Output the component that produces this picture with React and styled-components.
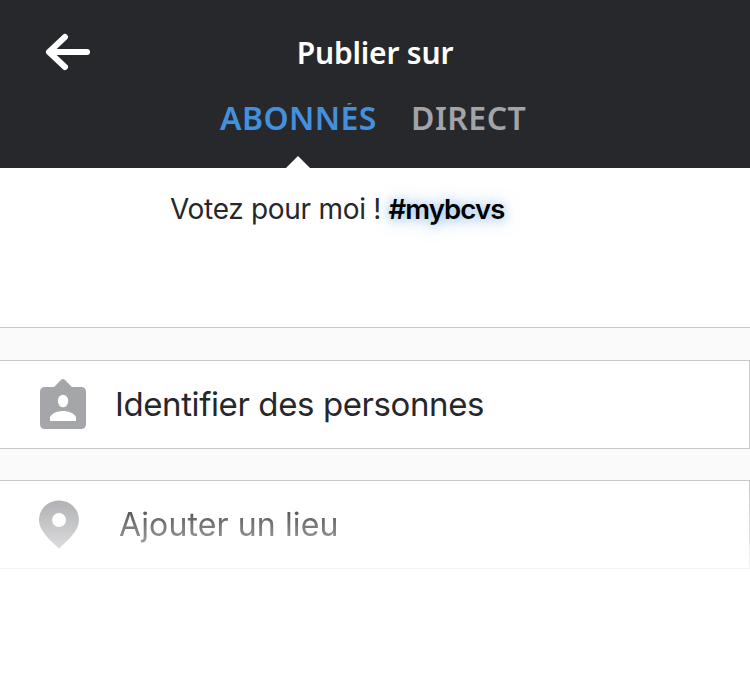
import React from "react";
import styled, { createGlobalStyle } from "styled-components";

const GlobalStyle = createGlobalStyle`
  *, *::before, *::after { box-sizing: border-box; }
  body { margin: 0; background: #fff; }
`;

const Screen = styled.main`
  width: 750px;
  height: 698px;
  overflow: hidden;
  background: #fff;
  font-family: Inter, "Liberation Sans", sans-serif;
  color: #26272b;
`;

const Header = styled.header`
  position: relative;
  height: 168px;
  background: #27282c;
  font-family: "Noto Sans", "Open Sans", sans-serif;
  font-weight: 600;
`;

const TitleBar = styled.div`
  display: grid;
  grid-template-columns: 90px 1fr 90px;
  height: 99px;
`;

const BackButton = styled.button`
  padding: 33px 0 0 45px;
  border: 0;
  background: none;
  display: flex;
  align-items: flex-start;
`;

const Title = styled.h1`
  margin: 33px 0 0;
  text-align: center;
  font-size: 30px;
  line-height: 40px;
  font-weight: 600;
  letter-spacing: -0.2px;
  color: #fff;
`;

const Tabs = styled.nav`
  display: flex;
  gap: 34px;
  padding-left: 220px;
  clip-path: inset(4px 0 0 0);
`;

const Tab = styled.a`
  min-width: ${(p) => p.$width}px;
  white-space: nowrap;
  font-size: 32px;
  line-height: 38px;
  letter-spacing: ${(p) => p.$spacing}px;
  color: ${(p) => (p.$active ? "#4590dc" : "#a3a4a8")};
`;

const TabPointer = styled.span`
  position: absolute;
  left: 286px;
  bottom: 0;
  border: 12px solid transparent;
  border-top: 0;
  border-bottom-color: #fff;
`;

const Caption = styled.p`
  margin: 0;
  height: 159px;
  padding: 23px 0 0 170px;
  font-size: 28px;
  line-height: 36px;
  white-space: pre;
  letter-spacing: -0.3px;
`;

const Hashtag = styled.span`
  color: #000;
  font-size: 27.500px;
  font-weight: 600;
  letter-spacing: -0.9px;
  text-shadow: 0 1px 16px rgba(100, 165, 225, 0.7), 0 1px 9px rgba(120, 175, 225, 0.45);
`;

const Gap = styled.div`
  height: ${(p) => p.$height}px;
  background: #fafafa;
  border-top: ${(p) => (p.$line ? "1px solid #c7c8ca" : "0")};
`;

const Row = styled.section`
  display: flex;
  align-items: flex-start;
  height: 89px;
  border: 1px solid #c7c8ca;
  border-left: 0;
`;

const Fade = styled.div`
  mask-image: linear-gradient(to bottom, #000 8px, transparent 109px);
`;

const IconSlot = styled.span`
  display: flex;
  width: ${(p) => p.$width}px;
  padding: 18px 0 0 38px;
`;

const Label = styled.span`
  padding-top: ${(p) => p.$top}px;
  font-size: ${(p) => p.$size}px;
  line-height: 44px;
  letter-spacing: ${(p) => p.$spacing}px;
  white-space: nowrap;
`;

function ArrowIcon() {
  return (
    <svg width="46" height="38" fill="none" stroke="#fff" strokeWidth="6" strokeLinecap="round" strokeLinejoin="round">
      <path d="M20 4 4 19 20 34M4 19H42" />
    </svg>
  );
}

function PersonTagIcon() {
  return (
    <svg width="50" height="52" fill="#a5a6a9">
      <path d="M7 8h9l7-7q2-2 4 0l7 7h9q5 0 5 5v32q0 5-5 5H7q-5 0-5-5V13q0-5 5-5Z" />
      <ellipse cx="25" cy="22" rx="5.2" ry="6.3" fill="#fff" />
      <path d="M12 42v-4c2-4 8-6 13-6s11 2 13 6v4Z" fill="#fff" />
    </svg>
  );
}

function PinIcon() {
  return (
    <svg width="42" height="52" fill="#a5a6a9">
      <path fillRule="evenodd" d="M21 1.500C10 1.500 1 10 1 21c0 11 11 20 20 28.500C30 41 41 32 41 21 41 10 32 1.500 21 1.500Zm0 12.500a7 7 0 1 1 0 14 7 7 0 0 1 0-14Z" />
    </svg>
  );
}

export default function App() {
  return (
    <>
      <GlobalStyle />
      <Screen>
        <Header>
          <TitleBar>
            <BackButton aria-label="Retour"><ArrowIcon /></BackButton>
            <Title>Publier sur</Title>
          </TitleBar>
          <Tabs>
            <Tab $active $width={157} $spacing={0.4}>ABONNÉS</Tab>
            <Tab $width={116} $spacing={0.5}>DIRECT</Tab>
          </Tabs>
          <TabPointer />
        </Header>
        <Caption>Votez pour moi ! <Hashtag>#mybcvs</Hashtag></Caption>
        <Gap $height={33} $line />
        <Row>
          <IconSlot $width={115}><PersonTagIcon /></IconSlot>
          <Label $top={21} $size={33} $spacing={-0.4}>Identifier des personnes</Label>
        </Row>
        <Gap $height={31} />
        <Fade>
          <Row>
            <IconSlot $width={119}><PinIcon /></IconSlot>
            <Label $top={22} $size={32} $spacing={0.12}>Ajouter un lieu</Label>
          </Row>
        </Fade>
      </Screen>
    </>
  );
}
